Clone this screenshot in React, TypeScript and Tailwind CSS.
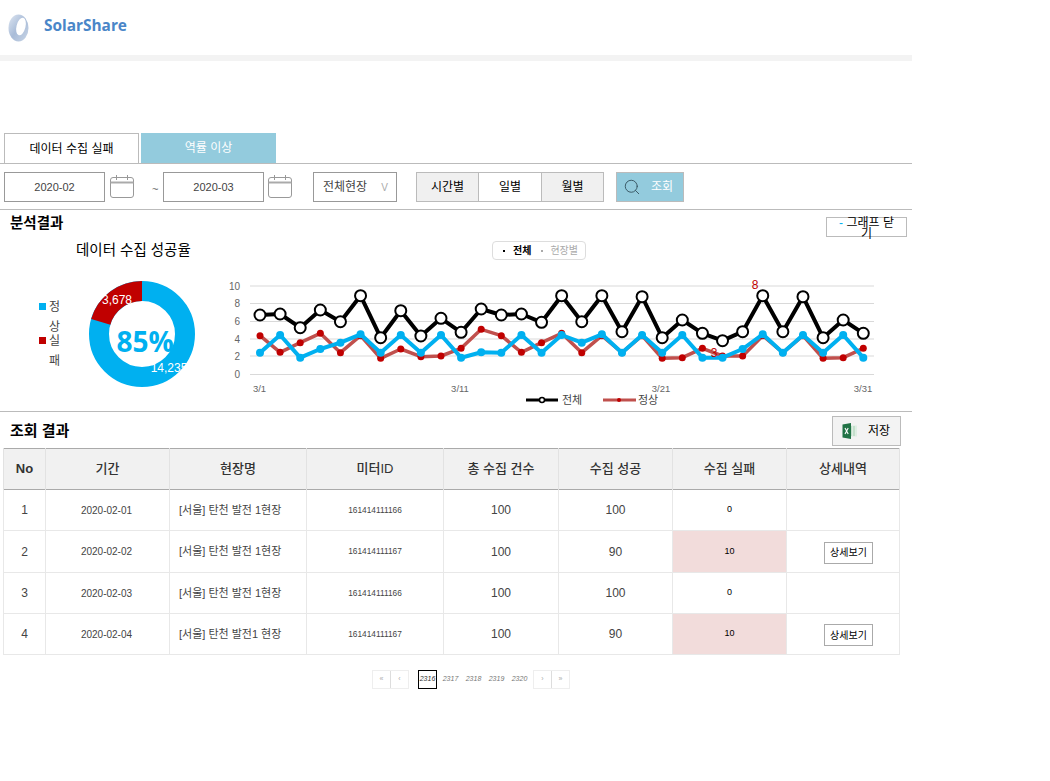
import { Search } from 'lucide-react'

const blackY = [315, 314, 327.7, 310, 321.7, 295.7, 337.7, 310.7, 336, 318.3, 332.3, 309, 315, 314, 322.3, 295.7, 321.7, 295.7, 331.7, 296.7, 337.7, 320, 333.3, 340.7, 331.7, 295.7, 331.7, 296.7, 337.7, 320, 333.3]
const redY = [335.7, 352.3, 342.7, 333.3, 352.7, 335.7, 358.3, 349, 356.7, 356, 348.3, 329.3, 335.7, 352.3, 342.7, 333.3, 352.7, 335.7, 352.7, 335.7, 358.3, 357.7, 348.3, 356, 356, 335.7, 352.7, 335.7, 358.3, 357.7, 348.3]
const blueY = [352.7, 335, 357.7, 349, 342.7, 334.3, 352.7, 335, 352.7, 335, 357.7, 352.3, 352.7, 335, 352.7, 335, 342.7, 334.3, 352.7, 335, 352.7, 335, 357.7, 357.7, 349, 334.3, 352.7, 335, 352.7, 335, 357.7]

const pointX = (i: number) => 260 + i * 20.11
const toPoints = (ys: number[]) => ys.map((y, i) => `${pointX(i)},${y - 270}`).join(' ')

const rows = [
  { no: 1, date: '2020-02-01', site: '[서울] 탄천 발전 1현장', meter: '161414111166', ok: 100, fail: 0 },
  { no: 2, date: '2020-02-02', site: '[서울] 탄천 발전 1현장', meter: '161414111167', ok: 90, fail: 10 },
  { no: 3, date: '2020-02-03', site: '[서울] 탄천 발전 1현장', meter: '161414111166', ok: 100, fail: 0 },
  { no: 4, date: '2020-02-04', site: '[서울] 탄천 발전1 현장', meter: '161414111167', ok: 90, fail: 10 },
]

const headers = ['No', '기간', '현장명', '미터ID', '총 수집 건수', '수집 성공', '수집 실패', '상세내역']

function CalendarIcon() {
  return (
    <svg width="24" height="24" viewBox="0 0 24 24" fill="none" stroke="#999" strokeWidth="1" className="shrink-0">
      <rect x="0.5" y="2.5" width="23" height="20" rx="2.5" />
      <path d="M0.5 7.5H23.5" stroke="#aaa" strokeWidth="2" />
      <path d="M6.5 0V5M17.5 0V5" />
    </svg>
  )
}

function Logo() {
  return (
    <svg width="22" height="28" viewBox="0 0 22 28" className="shrink-0">
      <defs>
        <linearGradient id="ring" x1="0" y1="0" x2="1" y2="1">
          <stop offset="0" stopColor="#dfe7f2" />
          <stop offset="0.5" stopColor="#a9bcd8" />
          <stop offset="1" stopColor="#c9d5e6" />
        </linearGradient>
      </defs>
      <ellipse cx="10.5" cy="14" rx="10" ry="13.5" fill="url(#ring)" />
      <ellipse cx="13" cy="12.5" rx="4.5" ry="9" fill="#fff" transform="rotate(14 13 12.5)" />
    </svg>
  )
}

function ExcelIcon() {
  return (
    <svg width="16" height="16" viewBox="0 0 16 16">
      <rect x="6" y="2.5" width="9" height="11" fill="#dfeee3" />
      <path d="M9 3V13M12 3V13" stroke="#a9d0b5" strokeWidth="1" />
      <path d="M0.5 1.5L9 0V16L0.5 14.5Z" fill="#217346" />
      <path d="M3 5L6.2 11M6.2 5L3 11" stroke="#fff" strokeWidth="1.1" />
    </svg>
  )
}

function Donut() {
  const cx = 54
  const cy = 54
  const r = 43
  // 실패 비중만큼 12시 왼쪽으로 호를 그림
  const failDeg = 73.6
  const rad = (failDeg * Math.PI) / 180
  const x = cx - r * Math.sin(rad)
  const y = cy - r * Math.cos(rad)
  return (
    <svg width="108" height="108" viewBox="0 0 108 108" className="shrink-0">
      <circle cx={cx} cy={cy} r={r} fill="none" stroke="#00b0f0" strokeWidth="20" />
      <path d={`M${x} ${y}A${r} ${r} 0 0 1 ${cx} ${cy - r}`} fill="none" stroke="#c00000" strokeWidth="20" />
      <text x="57" y="72" textAnchor="middle" fontSize="28" fontWeight="700" fill="#00b0f0" fontFamily="'Open Sans', sans-serif">85%</text>
      <text x="29" y="24" textAnchor="middle" fontSize="12" fill="#fff">3,678</text>
      <text x="81" y="92" textAnchor="middle" fontSize="12" fill="#fff">14,235</text>
    </svg>
  )
}

function LineChart() {
  return (
    <svg width="660" height="142" viewBox="225 0 660 142" className="shrink-0 font-['Liberation_Sans','Noto_Sans_CJK_KR',sans-serif]">
      {[16, 33.5, 51.5, 69, 86, 104.5].map((y, i) => (
        <g key={y}>
          <line x1="250" x2="874" y1={y} y2={y} stroke="#d9d9d9" />
          <text x="240" y={y + 3.5} textAnchor="end" fontSize="10" fill="#666">{10 - i * 2}</text>
        </g>
      ))}
      <polyline points={toPoints(redY)} fill="none" stroke="#c0504d" strokeWidth="3.5" strokeLinejoin="round" />
      {redY.map((y, i) => <circle key={i} cx={pointX(i)} cy={y - 270} r="3.5" fill="#c00000" />)}
      <polyline points={toPoints(blackY)} fill="none" stroke="#000" strokeWidth="4" strokeLinejoin="round" />
      {blackY.map((y, i) => <circle key={i} cx={pointX(i)} cy={y - 270} r="5.5" fill="#fff" stroke="#000" strokeWidth="2" />)}
      <polyline points={toPoints(blueY)} fill="none" stroke="#00b0f0" strokeWidth="4" strokeLinejoin="round" />
      {blueY.map((y, i) => <circle key={i} cx={pointX(i)} cy={y - 270} r="4" fill="#00b0f0" />)}
      <text x="755" y="19" textAnchor="middle" fontSize="12" fill="#c00000">8</text>
      <text x="714" y="87" textAnchor="middle" fontSize="12" fill="#c00000">3</text>
      {[['3/1', 259.5], ['3/11', 460], ['3/21', 661], ['3/31', 863]].map(([t, x]) => (
        <text key={t} x={x} y="122" textAnchor="middle" fontSize="9.5" fill="#666">{t}</text>
      ))}
      <line x1="526" x2="558" y1="130" y2="130" stroke="#000" strokeWidth="3" />
      <circle cx="542" cy="130" r="2.5" fill="#fff" stroke="#000" strokeWidth="1.5" />
      <text x="562" y="134" fontSize="11" fill="#444">전체</text>
      <line x1="603" x2="636" y1="130" y2="130" stroke="#c0504d" strokeWidth="3" />
      <circle cx="619" cy="130" r="2" fill="#c00000" />
      <text x="638" y="134" fontSize="11" fill="#444">정상</text>
    </svg>
  )
}

export default function App() {
  return (
    <div className="w-[912px] min-h-[781px] bg-white font-['Liberation_Sans','Noto_Sans_CJK_KR',sans-serif] text-[#444]">
      {/* Header */}
      <div className="flex h-[55px] items-center gap-[14px] pl-[8px]">
        <Logo />
        <span className="-mt-[4px] font-['Open_Sans',sans-serif] text-[15.4px] font-bold text-[#4a86c8]">SolarShare</span>
      </div>
      <div className="h-[6px] bg-[#f3f3f3]" />

      {/* Tabs */}
      <div className="mt-[72px] flex h-[31px] gap-[2px] border-b border-[#bbb] pl-1">
        <button className="h-[30px] w-[135px] border border-b-0 border-[#bbb] text-[12px] text-black">데이터 수집 실패</button>
        <button className="h-[30px] w-[135px] bg-[#93cbdd] text-[12px] text-white">역률 이상</button>
      </div>

      {/* Filter */}
      <div className="flex h-[46px] items-center border-b border-[#bbb] pl-1 pt-[1px] text-[12px]">
        <div className="flex h-[30px] w-[101px] items-center justify-center border border-[#999] text-[11px]">2020-02</div>
        <div className="ml-[5px]"><CalendarIcon /></div>
        <span className="ml-[18px] mt-[5px] w-[11px] text-[11px] text-[#666]">~</span>
        <div className="flex h-[30px] w-[101px] items-center justify-center border border-[#999] text-[11px]">2020-03</div>
        <div className="ml-1"><CalendarIcon /></div>
        <div className="ml-[21px] flex h-[30px] w-[84px] items-center justify-between border border-[#999] pl-[9px] pr-[8px]">
          <span>전체현장</span>
          <span className="text-[10px] text-[#aaa]">V</span>
        </div>
        <div className="ml-[19px] flex h-[30px] w-[188px] border border-[#bbb] text-black">
          <div className="flex w-[61px] items-center justify-center bg-[#f0f0f0]">시간별</div>
          <div className="flex w-[64px] items-center justify-center border-x border-[#bbb]">일별</div>
          <div className="flex flex-1 items-center justify-center bg-[#f0f0f0]">월별</div>
        </div>
        <button className="ml-[12px] flex h-[30px] w-[68px] items-center gap-[10px] border border-[#bbb] bg-[#93cbdd] pl-[6px] text-white">
          <Search size={18} strokeWidth={1.2} className="text-[#33505c]" />
          <span>조회</span>
        </button>
      </div>

      {/* Analysis */}
      <div className="h-[202px] border-b border-[#bbb]">
        <div className="flex h-[30px] items-start justify-between pl-[10px] pr-[5px] pt-[7px]">
          <span className="text-[14.5px] font-bold leading-[13px] text-black">분석결과</span>
          <button className="h-[20px] w-[81px] break-all border border-[#bbb] px-2 text-[12px] leading-[11px] text-black">
            <span className="text-[#00b0f0]">- </span>그래프 닫기
          </button>
        </div>
        <div className="flex h-[21px] items-center pl-[76px]">
          <span className="w-[116px] whitespace-nowrap text-[14.5px] text-black">데이터 수집 성공율</span>
          <div className="ml-[300px] flex h-[19px] w-[94px] items-center rounded-[4px] border border-[#ddd] pl-[10px] text-[10px]">
            <span className="size-[2px] bg-black" />
            <span className="ml-[8px] font-bold text-black">전체</span>
            <span className="ml-[10px] size-[2px] bg-[#aaa]" />
            <span className="ml-[7px] text-[#aaa]">현장별</span>
          </div>
        </div>
        <div className="mt-[9px] flex h-[142px] items-start">
          <div className="ml-[39px] mt-[27px] w-[22px] text-[12px] leading-[20px]">
            <div className="flex h-[34px] gap-[3px]">
              <span className="mt-[6px] size-[7px] shrink-0 bg-[#00b0f0]" />
              <span className="w-[12px] break-all">정상</span>
            </div>
            <div className="flex h-[34px] gap-[3px]">
              <span className="mt-[6px] size-[7px] shrink-0 bg-[#c00000]" />
              <span className="w-[12px] break-all">실패</span>
            </div>
          </div>
          <div className="ml-[27px] mt-[10px]"><Donut /></div>
          <div className="ml-[29px]"><LineChart /></div>
        </div>
      </div>

      {/* Result */}
      <div className="flex h-[36px] items-center justify-between pl-[10px] pr-[11px] pt-[2px]">
        <span className="text-[15px] font-bold text-black">조회 결과</span>
        <button className="flex h-[30px] w-[69px] items-center gap-[10px] border border-[#bbb] bg-[#f3f3f3] pl-[9px] text-[12px] text-black">
          <ExcelIcon />
          <span>저장</span>
        </button>
      </div>

      <div className="pl-[3px]">
        <table className="w-[896px] table-fixed border-collapse">
          <colgroup>
            <col className="w-[42px]" />
            <col className="w-[124px]" />
            <col className="w-[137px]" />
            <col className="w-[137px]" />
            <col className="w-[115px]" />
            <col className="w-[114px]" />
            <col className="w-[114px]" />
            <col className="w-[113px]" />
          </colgroup>
          <thead>
            <tr className="h-[41px] border-y border-y-[#aaa] bg-[#f1f1f1]">
              {headers.map((h, i) => (
                <th key={h} className={`border-x border-x-[#e2e2e2] text-[13px] text-[#333] ${i === 0 ? 'font-bold' : 'font-medium'}`}>{h}</th>
              ))}
            </tr>
          </thead>
          <tbody>
            {rows.map((r) => (
              <tr key={r.no} className={`border-b border-[#e8e8e8] ${r.no === 2 ? 'h-[42px]' : 'h-[41px]'}`}>
                <td className="border-x border-[#e8e8e8] text-center text-[12px]">{r.no}</td>
                <td className="border-x border-[#e8e8e8] pr-[2px] text-center text-[10px]">{r.date}</td>
                <td className="border-x border-[#e8e8e8] pl-[9px] text-[11px]">{r.site}</td>
                <td className="border-x border-[#e8e8e8] text-center text-[8.3px]">{r.meter}</td>
                <td className="border-x border-[#e8e8e8] text-center text-[12px]">100</td>
                <td className="border-x border-[#e8e8e8] text-center text-[12px]">{r.ok}</td>
                <td className={`border-x border-[#e8e8e8] text-center text-[9px] text-black ${r.fail ? 'bg-[#f2dcdb]' : ''}`}>{r.fail}</td>
                <td className="border-x border-[#e8e8e8] text-center">
                  {r.fail > 0 && (
                    <button className="ml-[11px] h-[22px] w-[49px] border border-[#aaa] text-[10px] text-black">상세보기</button>
                  )}
                </td>
              </tr>
            ))}
          </tbody>
        </table>
      </div>

      {/* Pagination */}
      <div className="mt-[15px] flex h-[19px] justify-center pl-[30px] text-[7px] italic text-[#777]">
        <div className="flex h-[19px] w-[37px] border border-[#eee] not-italic text-[#aaa]">
          <span className="flex flex-1 items-center justify-center border-r border-[#ddd]">«</span>
          <span className="flex flex-1 items-center justify-center">‹</span>
        </div>
        <span className="ml-[9px] flex h-[19px] w-[19px] items-center justify-center border border-black text-[#333]">2316</span>
        <span className="ml-[4px] flex w-[19px] items-center justify-center">2317</span>
        <span className="ml-[4px] flex w-[19px] items-center justify-center">2318</span>
        <span className="ml-[4px] flex w-[19px] items-center justify-center">2319</span>
        <span className="ml-[4px] flex w-[19px] items-center justify-center">2320</span>
        <div className="ml-[4px] flex h-[19px] w-[37px] border border-[#eee] not-italic text-[#aaa]">
          <span className="flex flex-1 items-center justify-center border-r border-[#ddd]">›</span>
          <span className="flex flex-1 items-center justify-center">»</span>
        </div>
      </div>
    </div>
  )
}
